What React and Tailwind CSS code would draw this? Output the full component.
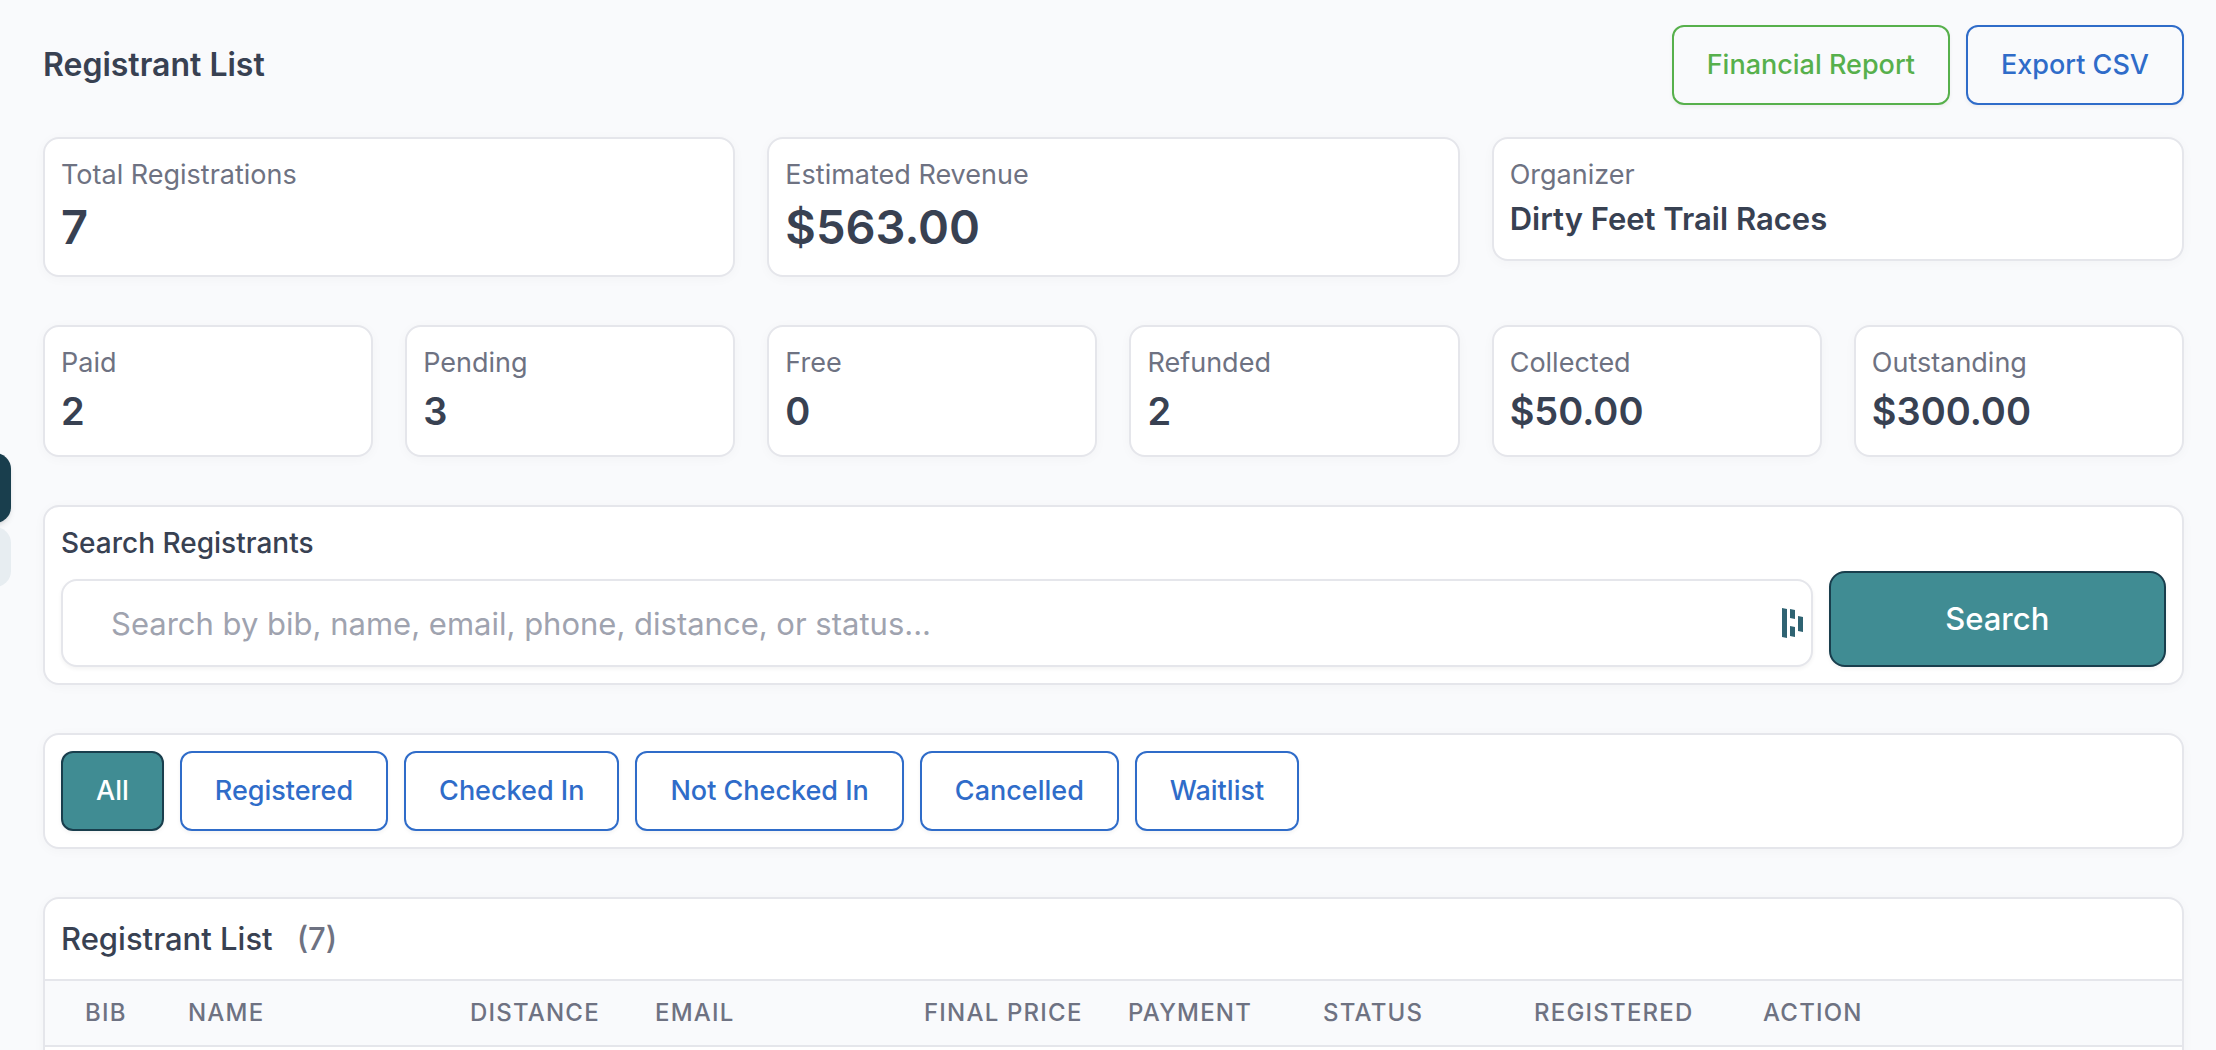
import { useState } from "react";

const totals = [
  { label: "Total Registrations", value: "7", size: "text-[47px] leading-16" },
  { label: "Estimated Revenue", value: "$563.00", size: "text-[47px] leading-16" },
  { label: "Organizer", value: "Dirty Feet Trail Races", size: "text-[31px] leading-12" },
];

const breakdown = [
  { label: "Paid", value: "2" },
  { label: "Pending", value: "3" },
  { label: "Free", value: "0" },
  { label: "Refunded", value: "2" },
  { label: "Collected", value: "$50.00" },
  { label: "Outstanding", value: "$300.00" },
];

const filters = ["All", "Registered", "Checked In", "Not Checked In", "Cancelled", "Waitlist"];

const columns = [
  { label: "Bib", width: "w-[103px]" },
  { label: "Name", width: "w-[282px]" },
  { label: "Distance", width: "w-[185px]" },
  { label: "Email", width: "w-[269px]" },
  { label: "Final Price", width: "w-[204px]" },
  { label: "Payment", width: "w-[195px]" },
  { label: "Status", width: "w-[211px]" },
  { label: "Registered", width: "w-[229px]" },
  { label: "Action", width: "" },
];

const Card = ({ className = "", children }) => (
  <div className={`bg-white border-2 border-[#e5e6eb] rounded-2xl shadow-[0_2px_12px_rgba(0,0,0,0.03)] ${className}`}>
    {children}
  </div>
);

const StatCard = ({ label, value, size }) => (
  <Card className="p-4">
    <div className="text-[27px] leading-10 text-[#6e7282]">{label}</div>
    <div className={`font-semibold ${size}`}>{value}</div>
  </Card>
);

const buttonTones = {
  green: "border-[#57b04c] text-[#57b04c]",
  blue: "border-[#2f6cc9] text-[#2f6cc9]",
  active: "border-[#193e4d] bg-[#408c93] text-white",
};

const Button = ({ tone = "blue", children, ...props }) => (
  <button
    type="button"
    className={`h-20 px-[33px] border-2 rounded-xl text-[27px] leading-10 font-medium whitespace-nowrap shadow-[0_2px_4px_rgba(0,0,0,0.05)] cursor-pointer ${buttonTones[tone]}`}
    {...props}
  >
    {children}
  </button>
);

const FieldIcon = () => (
  <svg viewBox="0 0 21 30" className="w-[21px] h-[30px]" fill="#2f6372" aria-hidden="true">
    <path d="M0 0 L5 1 V30 L0 29 Z" />
    <path d="M8 1 L13 2 V11 L8 10 Z" />
    <path d="M8 18 L13 19 V29 L8 28 Z" />
    <path d="M16 8 L21 9 V24 L16 23 Z" />
  </svg>
);

const App = () => {
  const [query, setQuery] = useState("");
  const [filter, setFilter] = useState("All");

  return (
    <div className="flex h-screen overflow-hidden bg-[#f9fafc] text-[#384152] font-['Inter','Liberation_Sans',sans-serif]">
      {/* Collapsed side navigation */}
      <aside className="w-[11px] shrink-0 pt-[453px] flex flex-col items-end gap-1">
        <button type="button" aria-label="Current section" className="w-20 h-[70px] shrink-0 rounded-2xl bg-[#193e4d] shadow-md" />
        <button type="button" aria-label="Next section" className="w-20 h-[60px] shrink-0 rounded-2xl bg-[#e7edf1]" />
      </aside>

      <main className="flex-1 min-w-0 px-8 pt-[25px]">
        <header className="flex items-center justify-between mb-8">
          <h1 className="text-[32px] leading-12 font-semibold">Registrant List</h1>
          <div className="flex gap-4">
            <Button tone="green">Financial Report</Button>
            <Button>Export CSV</Button>
          </div>
        </header>

        {/* Totals */}
        <section className="grid grid-cols-3 items-start gap-8 mb-12">
          {totals.map((item) => (
            <StatCard key={item.label} {...item} />
          ))}
        </section>

        {/* Payment breakdown */}
        <section className="grid grid-cols-6 gap-8 mb-12">
          {breakdown.map((item) => (
            <StatCard key={item.label} size="text-[38px] leading-14" {...item} />
          ))}
        </section>

        {/* Search */}
        <Card className="p-4 mb-12">
          <form className="grid grid-cols-6 items-end gap-4" onSubmit={(e) => e.preventDefault()}>
            <div className="col-span-5">
              <label htmlFor="search" className="block mb-4 text-[28px] leading-10 font-medium">
                Search Registrants
              </label>
              <div className="relative">
                <input
                  id="search"
                  type="text"
                  value={query}
                  onChange={(e) => setQuery(e.target.value)}
                  placeholder="Search by bib, name, email, phone, distance, or status..."
                  className="block w-full h-22 px-12 border-2 border-[#e5e6eb] rounded-2xl bg-white text-[31px] leading-12 placeholder:text-[#9fa3af] shadow-[0_2px_4px_rgba(0,0,0,0.05)]"
                />
                <span className="absolute inset-y-0 right-[10px] flex items-center">
                  <FieldIcon />
                </span>
              </div>
            </div>
            <button
              type="submit"
              className="h-24 border-2 border-[#193e4d] rounded-2xl bg-[#408c93] text-white text-[31px] leading-12 font-medium shadow-[0_2px_4px_rgba(0,0,0,0.05)] cursor-pointer"
            >
              Search
            </button>
          </form>
        </Card>

        {/* Status filters */}
        <Card className="p-4 mb-12 flex flex-wrap gap-4">
          {filters.map((name) => (
            <Button
              key={name}
              tone={filter === name ? "active" : "blue"}
              aria-pressed={filter === name}
              onClick={() => setFilter(name)}
            >
              {name}
            </Button>
          ))}
        </Card>

        {/* Registrant table */}
        <Card className="overflow-hidden">
          <div className="flex items-center gap-6 p-4 border-b-2 border-[#e5e6eb] text-[31px] leading-12">
            <h2 className="font-medium">Registrant List</h2>
            <span className="font-medium text-[#6e7282]">(7)</span>
          </div>
          <table className="w-full table-fixed border-collapse">
            <thead className="bg-[#f9fafc]">
              <tr>
                {columns.map((column) => (
                  <th
                    key={column.label}
                    scope="col"
                    className={`pl-10 py-4 text-left text-2xl leading-8 font-medium uppercase tracking-wider whitespace-nowrap text-[#6e7282] ${column.width}`}
                  >
                    {column.label}
                  </th>
                ))}
              </tr>
            </thead>
            <tbody>
              <tr className="h-20 border-t-2 border-[#e5e6eb]">
                <td colSpan={columns.length} />
              </tr>
            </tbody>
          </table>
        </Card>
      </main>
    </div>
  );
};

export default App;
